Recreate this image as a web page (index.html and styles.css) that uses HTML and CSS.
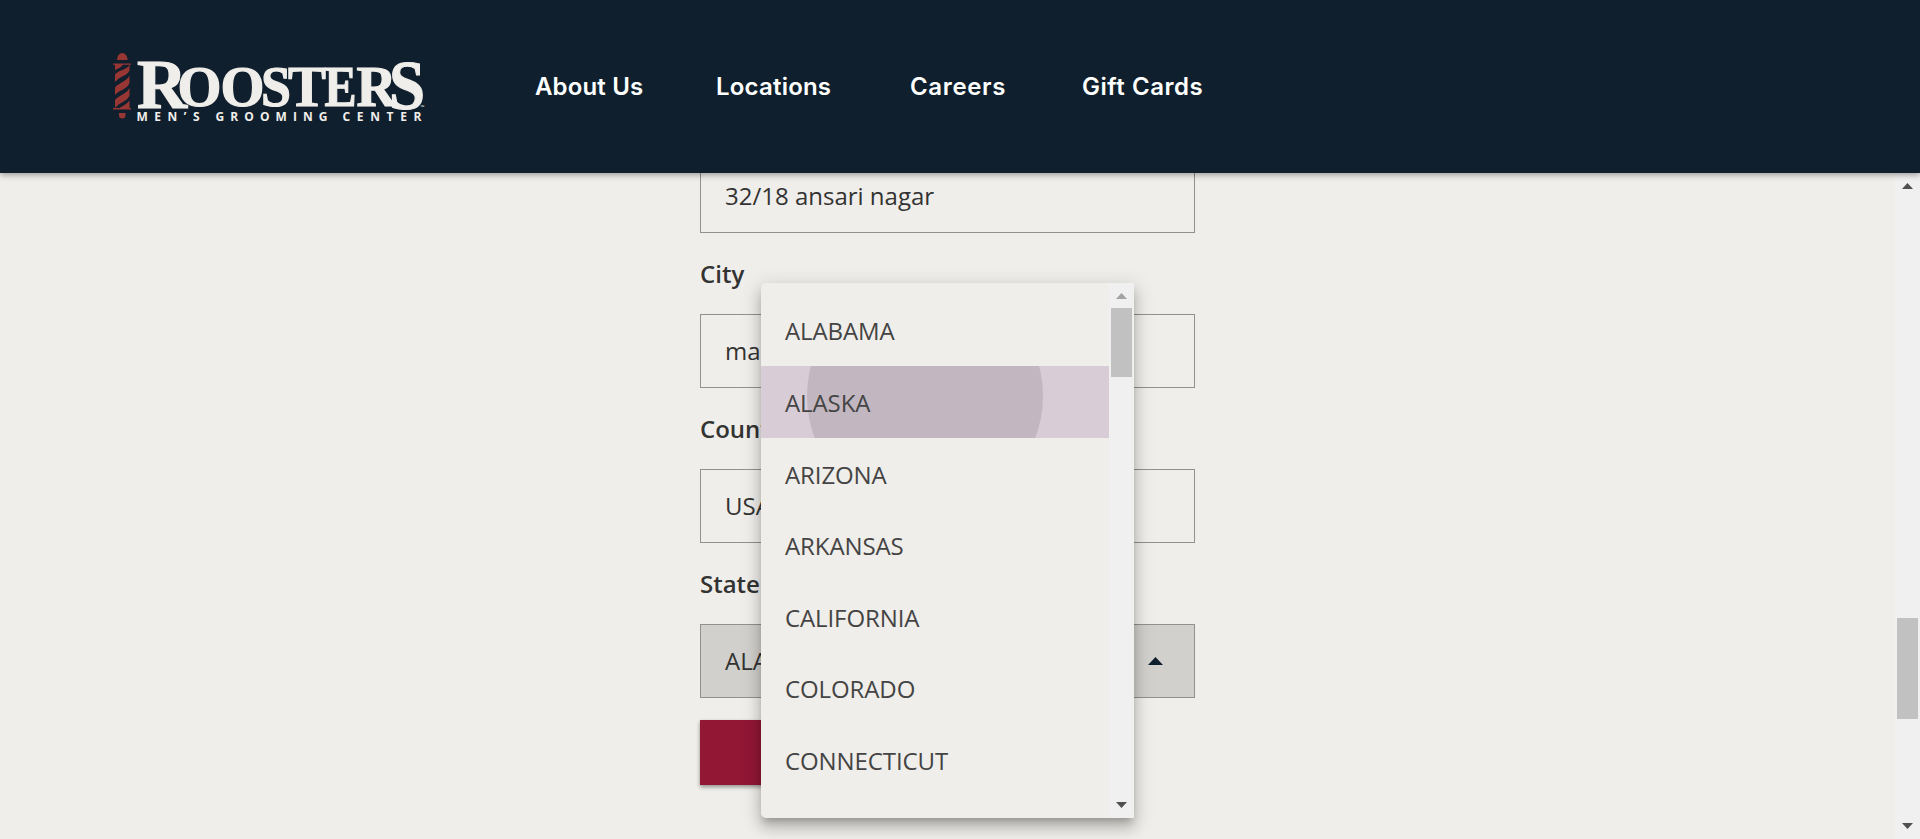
FILE: index.html
```html
<!DOCTYPE html>
<html lang="en">
<head>
<meta charset="utf-8">
<title>Roosters Men's Grooming Center</title>
<link rel="stylesheet" href="styles.css">
</head>
<body>
<header class="header">
  <svg class="logo" width="316" height="72" viewBox="112 51 316 72" role="img">
    <g class="pole">
      <path d="M117 60a5.300 7 0 1 1 10.600 0zM113 63.500h18v1.300h-18zM113 108h18v1.400h-18zM119 113h6.500v2a3.200 3.500 0 0 1-6.500 0z"/>
      <path d="M115 64h8c-1 3-4 4.500-8 6zM129.500 65v5.500c-2 5-10 6-14.500 11.500v-7.500c4-5 11-4 14.500-9.500zM129.500 75.500v7.500c-2 6-10 7-14.500 12v-7.500c4-5 11-5.500 14.500-12zM129.500 88v8c-3 5.500-10 6.500-14.500 12v-8c4-5 11-5.500 14.500-12zM129.500 100.500v7.500h-10c3-2 7-3.500 10-7.500z"/>
    </g>
    <g class="wordmark">
      <text class="cap" x="137" y="108" textLength="50" lengthAdjust="spacingAndGlyphs">R</text>
      <text class="small" x="177.500" y="106" textLength="44" lengthAdjust="spacingAndGlyphs">O</text>
      <text class="small" x="220.500" y="106" textLength="44" lengthAdjust="spacingAndGlyphs">O</text>
      <text class="small" x="261" y="106" textLength="30" lengthAdjust="spacingAndGlyphs">S</text>
      <text class="small" x="288" y="106" textLength="38" lengthAdjust="spacingAndGlyphs">T</text>
      <text class="small" x="324.500" y="106" textLength="32" lengthAdjust="spacingAndGlyphs">E</text>
      <text class="small" x="356.500" y="106" textLength="40" lengthAdjust="spacingAndGlyphs">R</text>
      <text class="cap" x="389" y="109" textLength="36" lengthAdjust="spacingAndGlyphs">S</text>
    </g>
    <g class="tagline">
      <text x="136.500" y="121" textLength="63">MEN’S</text>
      <text x="215.500" y="121" textLength="112">GROOMING</text>
      <text x="342.500" y="121" textLength="79">CENTER</text>
      <text class="tm" x="420.500" y="109">™</text>
    </g>
  </svg>
  <nav class="nav">
    <a class="about">About Us</a>
    <a class="locations">Locations</a>
    <a class="careers">Careers</a>
    <a class="gifts">Gift Cards</a>
  </nav>
</header>
<main class="page">
  <form class="form">
    <div class="field">32/18 ansari nagar</div>
    <label class="label">City</label>
    <div class="field">mau</div>
    <label class="label">Country</label>
    <div class="field">USA</div>
    <label class="label">State</label>
    <div class="field select"><span>ALASKA</span><svg width="15" height="8" viewBox="0 0 15 8"><path d="M0 8L7.500 0 15 8z"/></svg></div>
    <div class="submit"></div>
  </form>
  <div class="scrollbar">
    <svg width="11" height="6" viewBox="0 0 11 6"><path d="M0 6L5.500 0 11 6z"/></svg>
    <div class="thumb"></div>
    <svg width="11" height="6" viewBox="0 0 11 6"><path d="M0 0L5.500 6 11 0z"/></svg>
  </div>
</main>
<div class="menu">
  <ul class="options">
    <li>ALABAMA</li>
    <li class="active"><span class="ripple"></span><span class="text">ALASKA</span></li>
    <li>ARIZONA</li>
    <li>ARKANSAS</li>
    <li>CALIFORNIA</li>
    <li>COLORADO</li>
    <li>CONNECTICUT</li>
  </ul>
  <div class="scrollbar menu-bar">
    <svg class="disabled" width="11" height="6" viewBox="0 0 11 6"><path d="M0 6L5.500 0 11 6z"/></svg>
    <div class="thumb"></div>
    <svg width="11" height="6" viewBox="0 0 11 6"><path d="M0 0L5.500 6 11 0z"/></svg>
  </div>
</div>
</body>
</html>
```

FILE: styles.css
```css
* { box-sizing: border-box; }
body {
  margin: 0;
  height: 839px;
  display: flex;
  flex-direction: column;
  overflow: hidden;
  background: #f0eeea;
  color: #333;
  font: 24px/1.36 "Open Sans", sans-serif;
}
.header {
  position: relative;
  z-index: 1;
  flex: none;
  height: 173px;
  padding-left: 112px;
  display: flex;
  align-items: center;
  background: #101f2d;
  box-shadow: 0 2px 6px rgba(0, 0, 0, .35);
}
.logo { flex: none; overflow: visible; }
.pole { fill: #983634; }
.wordmark {
  fill: #f0eeea;
  stroke: #f0eeea;
  stroke-width: 1.2px;
  font-family: "Liberation Serif", serif;
  font-weight: 700;
}
.cap { font-size: 69px; }
.small { font-size: 57px; }
.tagline { fill: #f0eeea; font: 700 12px "Open Sans", sans-serif; }
.tm { font-size: 5px; }
.nav {
  display: flex;
  margin-left: 107px;
  color: #fff;
  font: 600 24px/36px Inter, sans-serif;
  white-space: nowrap;
}
.about { width: 181px; letter-spacing: .15px; }
.locations { width: 194px; letter-spacing: .2px; }
.careers { width: 172px; letter-spacing: .65px; }
.gifts { letter-spacing: .55px; }
.page { flex: 1; min-height: 0; display: flex; justify-content: space-between; overflow: hidden; }
.form { width: 495px; margin: -14px 0 0 700px; display: flex; flex-direction: column; }
.field {
  flex: none;
  height: 74px;
  padding: 0 24px;
  border: 1px solid #919191;
  display: flex;
  align-items: center;
  justify-content: space-between;
}
.label { flex: none; height: 81px; padding-top: 25px; font-weight: 600; }
.select { background: #d2d0cc; padding-right: 31px; }
.select svg { fill: #101f2d; }
.submit {
  flex: none;
  width: 300px;
  height: 65px;
  margin-top: 22px;
  background: #911735;
  box-shadow: 0 2px 4px rgba(0, 0, 0, .4);
}
.scrollbar {
  flex: none;
  width: 25px;
  padding: 10px 0;
  background: #f0f0f0;
  display: flex;
  flex-direction: column;
  align-items: center;
}
.scrollbar svg { flex: none; fill: #505050; }
.scrollbar .thumb { width: 21px; height: 101px; margin: 429px 0 104px; background: #c1c1c1; flex: none; }
.menu {
  position: absolute;
  z-index: 2;
  left: 761px;
  top: 283px;
  width: 373px;
  height: 535px;
  display: flex;
  overflow: hidden;
  border-radius: 5px 0 0 5px;
  background: #f0eeea;
  color: #444;
  box-shadow: 0 6px 7px -3px rgba(0, 0, 0, .2), 0 10px 13px 1px rgba(0, 0, 0, .14), 0 4px 19px 3px rgba(0, 0, 0, .12);
}
.options { flex: 1; margin: 0; padding: 11.500px 0 0; list-style: none; letter-spacing: -.1px; }
.options li { position: relative; height: 71.550px; padding: 3px 24px 0; display: flex; align-items: center; overflow: hidden; }
.active { background: #d8ccd6; }
.ripple { position: absolute; left: 46px; top: -88px; width: 236px; height: 236px; border-radius: 50%; background: #c2b7c0; }
.text { position: relative; }
.menu-bar .disabled { fill: #a3a3a3; }
.menu-bar .thumb { height: 69px; margin: 9px 0 425px; }
```
